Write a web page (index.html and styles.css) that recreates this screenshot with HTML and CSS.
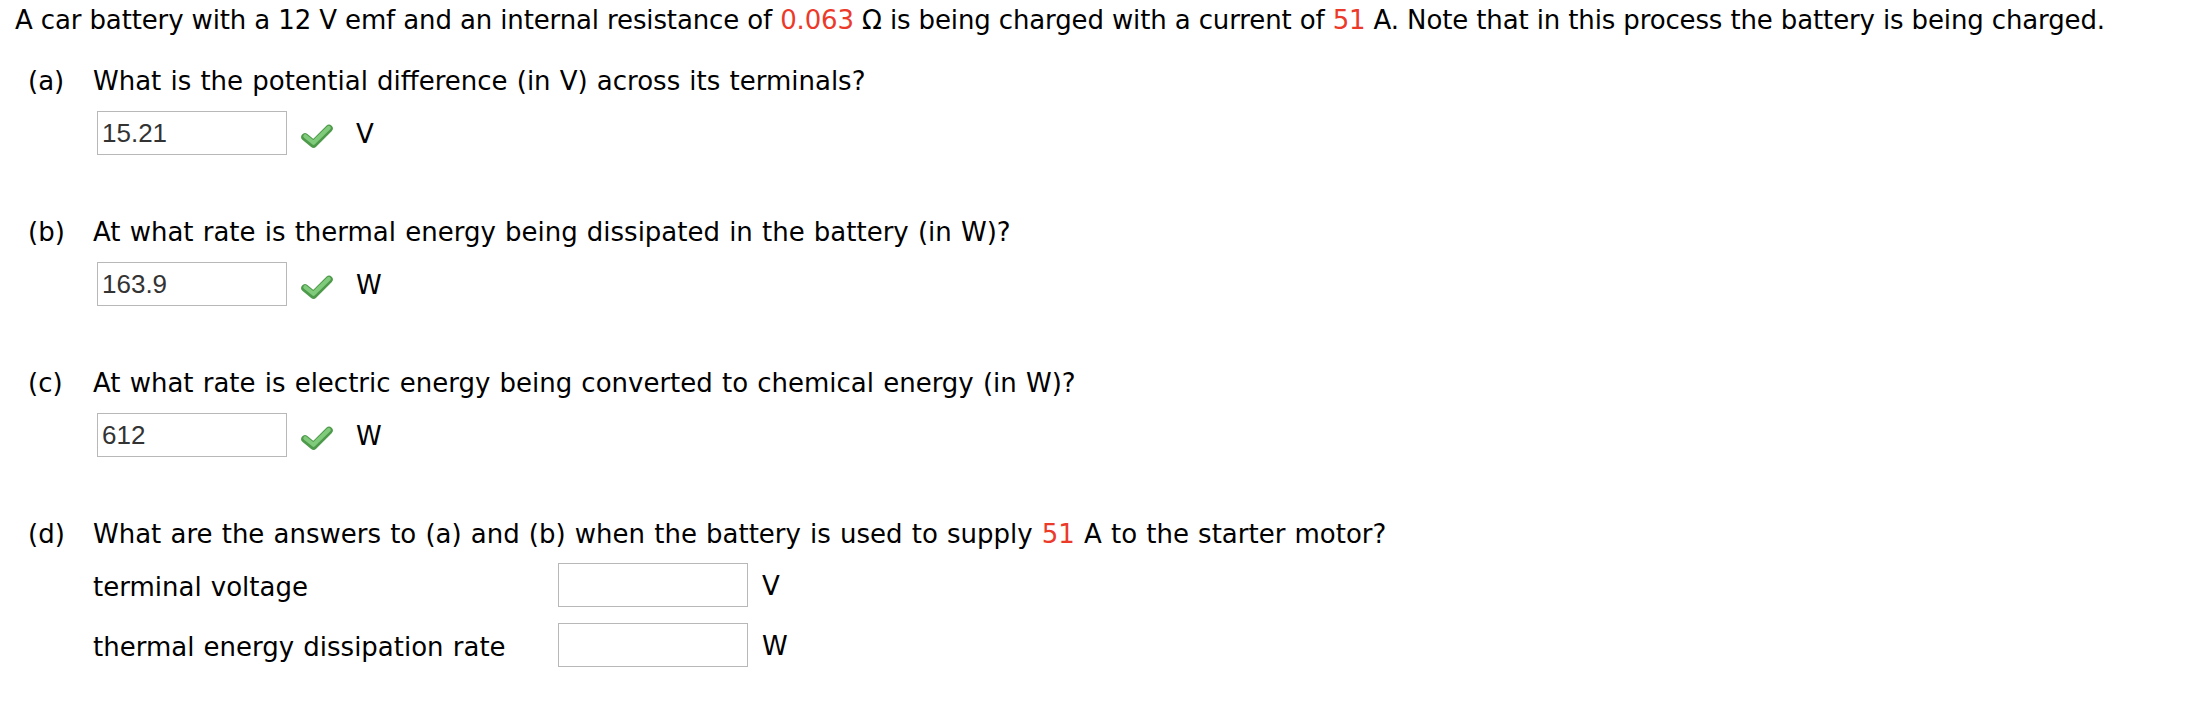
FILE: index.html
```html
<!DOCTYPE html>
<html lang="en">
<head>
<meta charset="utf-8">
<title>Car battery problem</title>
<link rel="stylesheet" href="styles.css">
</head>
<body>
<div class="page">
  <p class="intro">A car battery with a 12 V emf and an internal resistance of <span class="red">0.063</span> Ω is being charged with a current of <span class="red">51</span> A. Note that in this process the battery is being charged.</p>

  <div class="part first">
    <div class="q"><span class="tag">(a)</span><span>What is the potential difference (in V) across its terminals?</span></div>
    <div class="answer">
      <input class="ans" type="text" value="15.21" readonly>
      <svg class="check" viewBox="0 0 32 24" width="32" height="24"><path d="M4 13 L12.5 20 L28 4.5" fill="none" stroke="#4e9a4b" stroke-width="7.5" stroke-linecap="round" stroke-linejoin="round"/><path d="M4.3 12.2 L12.5 18.8 L27.8 3.8" fill="none" stroke="#80cb7b" stroke-width="4" stroke-linecap="round" stroke-linejoin="round"/></svg>
      <span class="unit">V</span>
    </div>
  </div>

  <div class="part">
    <div class="q"><span class="tag">(b)</span><span>At what rate is thermal energy being dissipated in the battery (in W)?</span></div>
    <div class="answer">
      <input class="ans" type="text" value="163.9" readonly>
      <svg class="check" viewBox="0 0 32 24" width="32" height="24"><path d="M4 13 L12.5 20 L28 4.5" fill="none" stroke="#4e9a4b" stroke-width="7.5" stroke-linecap="round" stroke-linejoin="round"/><path d="M4.3 12.2 L12.5 18.8 L27.8 3.8" fill="none" stroke="#80cb7b" stroke-width="4" stroke-linecap="round" stroke-linejoin="round"/></svg>
      <span class="unit">W</span>
    </div>
  </div>

  <div class="part">
    <div class="q"><span class="tag">(c)</span><span>At what rate is electric energy being converted to chemical energy (in W)?</span></div>
    <div class="answer">
      <input class="ans" type="text" value="612" readonly>
      <svg class="check" viewBox="0 0 32 24" width="32" height="24"><path d="M4 13 L12.5 20 L28 4.5" fill="none" stroke="#4e9a4b" stroke-width="7.5" stroke-linecap="round" stroke-linejoin="round"/><path d="M4.3 12.2 L12.5 18.8 L27.8 3.8" fill="none" stroke="#80cb7b" stroke-width="4" stroke-linecap="round" stroke-linejoin="round"/></svg>
      <span class="unit">W</span>
    </div>
  </div>

  <div class="part">
    <div class="q"><span class="tag">(d)</span><span>What are the answers to (a) and (b) when the battery is used to supply <span class="red">51</span> A to the starter motor?</span></div>
    <div class="sub">
      <span class="sublabel">terminal voltage</span>
      <input class="ans" type="text" value="">
      <span class="subunit">V</span>
    </div>
    <div class="sub second">
      <span class="sublabel">thermal energy dissipation rate</span>
      <input class="ans" type="text" value="">
      <span class="subunit">W</span>
    </div>
  </div>
</div>
</body>
</html>
```

FILE: styles.css
```css
html, body {
  margin: 0;
  padding: 0;
  background: #ffffff;
}

body {
  font-family: "DejaVu Sans", Verdana, sans-serif;
  font-size: 26px;
  line-height: 32px;
  color: #000000;
}

.page {
  padding: 0 0 0 15px;
}

.intro {
  margin: 0;
  padding-top: 4px;
  white-space: nowrap;
  letter-spacing: -0.13px;
}

.red {
  color: #ec3a2a;
}

.part {
  margin-top: 59px;
  padding-left: 13px;
}

.part.first {
  margin-top: 27px;
}

.q {
  display: flex;
  white-space: nowrap;
  padding-top: 2px;
  word-spacing: 0.9px;
}

.tag {
  display: inline-block;
  width: 65px;
  flex: none;
  word-spacing: 0;
}

.answer {
  display: flex;
  align-items: center;
  margin-top: 14px;
  margin-left: 69px;
  height: 44px;
}

.ans {
  box-sizing: border-box;
  width: 190px;
  height: 44px;
  margin: 0;
  padding: 0 4px;
  border: 1px solid #b8b8b8;
  border-radius: 0;
  background: #ffffff;
  font-family: "Liberation Sans", Arial, sans-serif;
  font-size: 26px;
  color: #333333;
  outline: none;
  flex: none;
}

.check {
  display: block;
  flex: none;
  margin-left: 14px;
  margin-top: 6px;
}

.unit {
  margin-left: 23px;
  padding-top: 2px;
}

.sub {
  display: flex;
  align-items: center;
  margin-top: 13px;
  margin-left: 65px;
  height: 44px;
}

.sub.second {
  margin-top: 16px;
}

.sublabel {
  width: 465px;
  flex: none;
  white-space: nowrap;
  word-spacing: 0.9px;
  padding-top: 3px;
}

.subunit {
  margin-left: 14px;
  padding-top: 2px;
}
```
